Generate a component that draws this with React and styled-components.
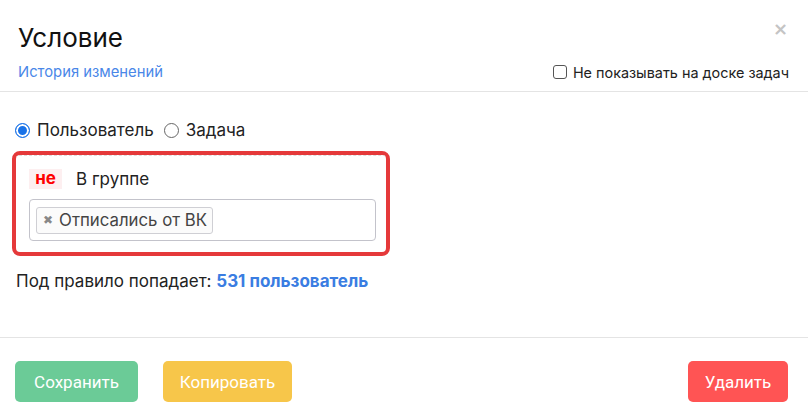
import styled, { createGlobalStyle } from "styled-components"

const Global = createGlobalStyle`
  html, body {
    margin: 0;
    padding: 0;
    background: #fff;
  }
  body {
    font-family: Inter, "Noto Sans", sans-serif;
    color: #222;
  }
`

const Modal = styled.div`
  width: 808px;
  height: 414px;
  display: flex;
  flex-direction: column;
  background: #fff;
`

const Header = styled.div`
  position: relative;
  padding: 22px 19px 0 18px;
  height: 69px;
  border-bottom: 1px solid #e4e4e4;
`

const Title = styled.h2`
  margin: 0;
  font-size: 26px;
  font-weight: 400;
  line-height: 31px;
  color: #111;
`

const Close = styled.span`
  position: absolute;
  top: 18px;
  right: 20px;
  font-size: 18px;
  font-weight: 700;
  color: #c4c4c4;
  font-family: "DejaVu Sans", sans-serif;
`

const SubRow = styled.div`
  display: flex;
  justify-content: space-between;
  align-items: center;
  margin-top: 10px;
`

const HistoryLink = styled.a`
  color: #4a87e8;
  font-size: 14.8px;
  text-decoration: none;
`

const CheckLabel = styled.label`
  display: flex;
  align-items: center;
  gap: 6px;
  font-size: 14.4px;
  color: #222;
`

const Box = styled.span`
  width: 12px;
  height: 12px;
  border: 1px solid #555;
  border-radius: 3px;
`

const Body = styled.div`
  flex: 1;
  padding: 28px 18px 0 12px;
  border-bottom: 1px solid #e4e4e4;
`

const RadioRow = styled.div`
  display: flex;
  align-items: center;
  gap: 10px;
  padding-left: 3px;
  font-size: 17px;
`

const RadioLabel = styled.label`
  display: flex;
  align-items: center;
  gap: 7px;
`

const Radio = styled.span`
  width: 15px;
  height: 15px;
  box-sizing: border-box;
  border-radius: 50%;
  border: ${p => (p.$on ? "1px solid #1a73e8" : "1px solid #666")};
  background: ${p => (p.$on ? "#1a73e8" : "#fff")};
  box-shadow: ${p => (p.$on ? "inset 0 0 0 2px #fff" : "none")};
`

const Rule = styled.div`
  margin-top: 11px;
  width: 378px;
  height: 105px;
  box-sizing: border-box;
  border: 4px solid #e5393a;
  border-radius: 8px;
  padding: 14px 10px 0 13px;
  position: relative;
  &::before {
    content: "";
    position: absolute;
    inset: 0;
    border-top: 1px dashed #ddd;
    border-radius: 3px;
    pointer-events: none;
  }
`

const RuleHead = styled.div`
  display: flex;
  align-items: center;
  gap: 14px;
  font-size: 17px;
`

const Not = styled.span`
  background: #fdeff0;
  color: #f00;
  font-weight: 700;
  font-size: 17px;
  padding: 0 5px;
  width: 23px;
  height: 20px;
  line-height: 19px;
  text-align: center;
`

const Field = styled.div`
  margin-top: 10px;
  height: 42px;
  box-sizing: border-box;
  border: 1px solid #c3c3cb;
  border-radius: 4px;
  display: flex;
  align-items: center;
  padding-left: 6px;
`

const Tag = styled.span`
  display: flex;
  align-items: center;
  gap: 6px;
  height: 27px;
  box-sizing: border-box;
  border: 1px solid #cfcfd4;
  border-radius: 3px;
  padding: 0 5px 0 6px;
  font-size: 16.8px;
  color: #444;
  background: #fbfbfb;
`

const TagX = styled.span`
  color: #888;
  font-size: 12px;
  font-weight: 700;
  font-family: "DejaVu Sans", sans-serif;
`

const Count = styled.p`
  margin: 15px 0 0 4px;
  font-size: 17px;
  color: #222;
`

const Num = styled.b`
  color: #3a7de2;
  font-weight: 700;
`

const Footer = styled.div`
  height: 76px;
  box-sizing: border-box;
  padding: 23px 20px 0 15px;
  display: flex;
  gap: 25px;
`

const Button = styled.button`
  height: 41px;
  border: none;
  border-radius: 5px;
  padding: 0 16px;
  min-width: ${p => p.$w}px;
  background: ${p => p.$bg};
  color: #fff;
  font-family: Roboto, "Liberation Sans", sans-serif;
  font-size: 17px;
  cursor: pointer;
  &:last-child {
    margin-left: auto;
  }
`

export default function App() {
  return (
    <Modal>
      <Global />
      <Header>
        <Title>Условие</Title>
        <Close>×</Close>
        <SubRow>
          <HistoryLink href="#">История изменений</HistoryLink>
          <CheckLabel>
            <Box />
            Не показывать на доске задач
          </CheckLabel>
        </SubRow>
      </Header>
      <Body>
        <RadioRow>
          <RadioLabel>
            <Radio $on />
            Пользователь
          </RadioLabel>
          <RadioLabel>
            <Radio />
            Задача
          </RadioLabel>
        </RadioRow>
        <Rule>
          <RuleHead>
            <Not>не</Not>
            В группе
          </RuleHead>
          <Field>
            <Tag>
              <TagX>✖</TagX>
              Отписались от ВК
            </Tag>
          </Field>
        </Rule>
        <Count>
          Под правило попадает: <Num>531 пользователь</Num>
        </Count>
      </Body>
      <Footer>
        <Button $bg="#6bcb97" $w={123}>Сохранить</Button>
        <Button $bg="#f7c64a" $w={129}>Копировать</Button>
        <Button $bg="#ff5454" $w={100}>Удалить</Button>
      </Footer>
    </Modal>
  )
}
